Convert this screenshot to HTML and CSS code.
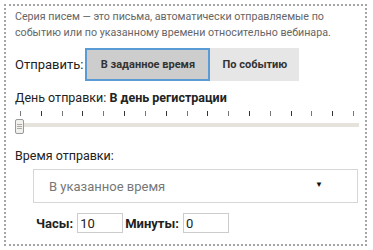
FILE: index.html
```html
<!DOCTYPE html>
<html lang="ru">
<head>
    <meta charset="UTF-8">
    <meta name="viewport" content="width=device-width, initial-scale=1.0">
    <title>Серия писем</title>
    <link rel="stylesheet" href="styles.css">
</head>
<body>
    <!-- Settings panel -->
    <div class="panel">
        <p class="hint">Серия писем — это письма, автоматически отправляемые по событию или по указанному времени относительно вебинара.</p>

        <div class="send-row">
            <span class="label">Отправить:</span>
            <div class="toggle">
                <button class="toggle-btn active">В заданное время</button>
                <button class="toggle-btn">По событию</button>
            </div>
        </div>

        <div class="day-label">День отправки: <b>В день регистрации</b></div>

        <!-- Day slider -->
        <div class="slider">
            <div class="ticks">
                <span></span><span></span><span></span><span></span><span></span><span></span>
                <span></span><span></span><span></span><span></span><span></span><span></span>
                <span></span><span></span><span></span><span></span><span></span>
            </div>
            <div class="track">
                <div class="handle"><i></i><i></i><i></i></div>
            </div>
        </div>

        <div class="time-label">Время отправки:</div>

        <div class="select-wrap">
            <select class="select">
                <option>В указанное время</option>
            </select>
            <span class="arrow">▼</span>
        </div>

        <div class="time-row">
            <label class="field-label">Часы:</label>
            <input class="num" type="text" value="10">
            <label class="field-label">Минуты:</label>
            <input class="num" type="text" value="0">
        </div>
    </div>
</body>
</html>
```

FILE: styles.css
```css
/* Basic Reset */
body, p {
    margin: 0;
    padding: 0;
}

body {
    margin: 4px;
    background-color: #fff;
    color: #222;
    font-family: Roboto, 'Liberation Sans', sans-serif;
}

.panel {
    box-sizing: border-box;
    width: 363px;
    height: 242px;
    border: 2px dotted #a6a6a6;
    padding: 3px 7px 0 9px;
}

.hint {
    font-size: 10.7px;
    line-height: 16px;
    color: #666;
}

/* Send mode */
.send-row {
    display: flex;
    align-items: center;
    margin-top: 7px;
}

.label {
    font-size: 13px;
    margin-right: 2px;
}

.toggle {
    display: flex;
}

.toggle-btn {
    height: 33px;
    border: 0;
    padding: 0 12px;
    background-color: #e6e6e6;
    color: #333;
    font-family: Roboto, 'Liberation Sans', sans-serif;
    font-size: 11px;
    font-weight: bold;
    white-space: nowrap;
}

.toggle-btn.active {
    width: 125px;
    background-color: #cdcdcd;
    border: 2px solid #5b9bd5;
}

.day-label {
    margin-top: 9px;
    font-size: 12.5px;
    line-height: 16px;
}

/* Slider */
.slider {
    padding: 5px 0 0 5px;
}

.ticks {
    display: flex;
    justify-content: space-between;
    width: 334px;
}

.ticks span {
    width: 1px;
    height: 5px;
    background-color: #333;
}

.ticks span:nth-child(odd) {
    background-color: #777;
}

.track {
    position: relative;
    margin-top: 7px;
    width: 339px;
    height: 4px;
    background-color: #e6e2dc;
}

.handle {
    position: absolute;
    left: -5px;
    top: -4px;
    box-sizing: border-box;
    width: 9px;
    height: 15px;
    border: 1px solid #999;
    border-radius: 2px;
    background-color: #f2f1ee;
    display: flex;
    flex-direction: column;
    align-items: center;
    justify-content: center;
    gap: 1px;
}

.handle i {
    width: 5px;
    height: 1px;
    background-color: #aaa;
}

.time-label {
    margin-top: 21px;
    font-size: 12.5px;
    line-height: 16px;
}

/* Select */
.select-wrap {
    position: relative;
    margin: 5px 0 0 18px;
    width: 325px;
}

.select {
    box-sizing: border-box;
    width: 100%;
    height: 34px;
    padding: 0 15px;
    border: 1px solid #d6d6d6;
    border-radius: 0;
    background-color: #fff;
    color: #777;
    font-family: Roboto, 'Liberation Sans', sans-serif;
    font-size: 13px;
    -webkit-appearance: none;
    appearance: none;
}

.arrow {
    position: absolute;
    right: 35px;
    top: 11px;
    font-size: 8px;
    color: #111;
}

/* Hours / minutes */
.time-row {
    display: flex;
    align-items: center;
    margin: 10px 0 0 21px;
}

.field-label {
    font-size: 13px;
    font-weight: bold;
    margin-right: 4px;
}

.num {
    box-sizing: border-box;
    width: 46px;
    height: 20px;
    margin-right: 2px;
    padding: 0 2px;
    border: 1px solid #ccc;
    font-family: Roboto, 'Liberation Sans', sans-serif;
    font-size: 13px;
    color: #222;
}
```
